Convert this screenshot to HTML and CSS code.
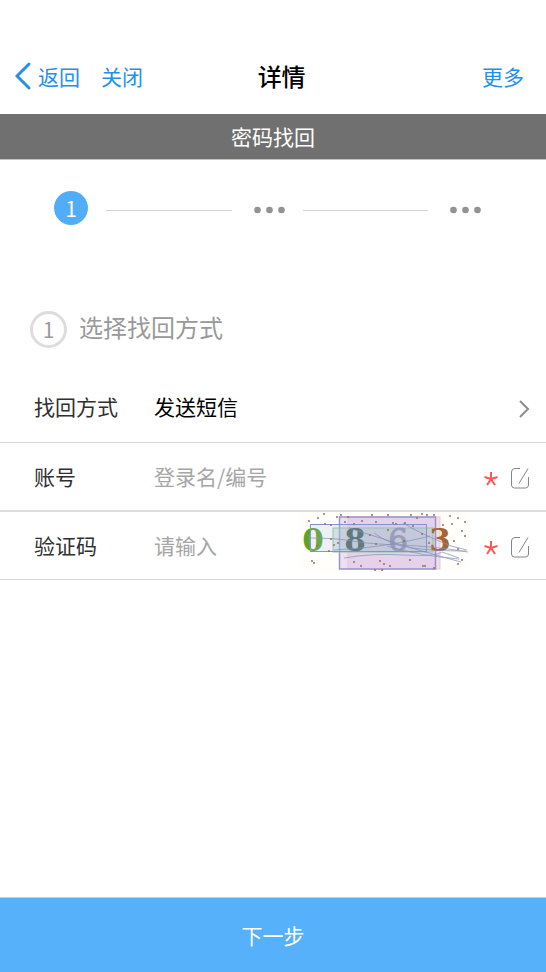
FILE: index.html
```html
<!DOCTYPE html>
<html lang="zh-CN">
<head>
<meta charset="utf-8">
<meta name="viewport" content="width=device-width, initial-scale=1">
<title>密码找回</title>
<link rel="stylesheet" href="styles.css">
</head>
<body>
<header class="navbar">
  <nav class="nav-left">
    <a class="nav-link back" href="#"><svg class="back-icon" viewBox="0 0 16 28" aria-hidden="true"><path d="M14 2 2 14l12 12"/></svg>返回</a>
    <a class="nav-link" href="#">关闭</a>
  </nav>
  <h1 class="nav-title">详情</h1>
  <a class="nav-link more" href="#">更多</a>
</header>
<div class="banner">密码找回</div>
<form class="content">
  <div class="steps">
    <span class="step-current">1</span>
    <span class="step-line"></span>
    <svg class="dots" viewBox="0 0 31 8" aria-hidden="true"><circle cx="3.500" cy="4" r="3.300"/><circle cx="15.500" cy="4" r="3.300"/><circle cx="27.500" cy="4" r="3.300"/></svg>
    <span class="step-line"></span>
    <svg class="dots" viewBox="0 0 31 8" aria-hidden="true"><circle cx="3.500" cy="4" r="3.300"/><circle cx="15.500" cy="4" r="3.300"/><circle cx="27.500" cy="4" r="3.300"/></svg>
  </div>
  <h2 class="section-title"><span class="section-number">1</span><span class="section-text">选择找回方式</span></h2>
  <div class="row">
    <label class="label" for="method">找回方式</label>
    <select class="control" id="method"><option>发送短信</option></select>
    <svg class="chevron" viewBox="0 0 12 20" aria-hidden="true"><path d="m2 2 8 8-8 8"/></svg>
  </div>
  <div class="row divided">
    <label class="label" for="account">账号</label>
    <input class="control" id="account" type="text" placeholder="登录名/编号">
    <svg class="required" viewBox="0 0 14 14" aria-hidden="true"><path d="M7 7V0M7 7 .5 5M7 7l6.500-2M7 7l-4 6M7 7l4 6"/></svg>
    <svg class="edit" viewBox="0 0 20 22" aria-hidden="true"><path d="M10 1.500H5Q1.500 1.500 1.500 5v13q0 3 3 3h11q3 0 3-3v-8"/><path d="m18 1.500-9 15"/></svg>
  </div>
  <div class="row">
    <label class="label" for="code">验证码</label>
    <input class="control" id="code" type="text" placeholder="请输入">
    <svg class="captcha" viewBox="0 0 170 60" role="img" aria-label="验证码图片">
      <rect width="170" height="60" fill="#fffefb"/>
      <rect x="49" y="5" width="92" height="52" fill="#f1deed" stroke="#e9c8cd"/>
      <rect x="40.500" y="5" width="96" height="52" fill="#d9c4e8" fill-opacity=".5" stroke="#9a93cb" stroke-width="1.500"/>
      <rect x="34" y="16" width="100" height="24" fill="#9fcbbd" fill-opacity=".38" stroke="#94c4a5"/>
      <g class="captcha-digits">
        <text x="14" y="39" fill="#5da326">0</text>
        <text x="56" y="39" fill="#4f6863">8</text>
        <text class="thin" x="99" y="39" fill="#9797ae" stroke="#9797ae">6</text>
        <text x="141" y="39" fill="#a8652f">3</text>
      </g>
      <rect x="11.500" y="12.500" width="116" height="27" fill="#a8b8e8" fill-opacity=".2" stroke="#8295d0"/>
      <g fill="none" stroke="#8290b8" stroke-opacity=".7" stroke-width="1">
        <path d="M11 26q26 0 42 3t48 4 68 7"/>
        <path d="M45 46q28-5 60-3t38-3l17 6"/>
        <path d="M50 16q25 8 50 16t62 18"/>
        <path d="M104 11q20 12 48 23l16 4"/>
        <path d="M75 21q16 12 38 15t54 3"/>
        <path d="M35 38q35-2 58-6t38-8"/>
        <path d="M88 34q34 10 72 13"/>
      </g>
      <path class="specks" fill="none" stroke="#96705f" d="M10 9h0M19 6h0M25 2h0M38 5h0M42 3h0M49 5h0M63 9h0M73 3h0M77 10h0M89 3h0M94 11h0M112 3h0M118 6h0M123 2h0M128 3h0M135 3h0M151 4h0M159 6h0M166 10h0M153 12h0M163 19h0M166 24h0M144 13h0M26 12h0M32 13h0M97 12h0M106 11h0M114 14h0M55 12h0M46 10h0M9 32h0M18 34h0M30 39h0M35 33h0M39 31h0M32 27h0M13 49h0M15 51h0M55 50h0M62 54h0M81 49h0M85 52h0M91 54h0M76 58h0M83 58h0M124 54h0M126 54h0M111 48h0M135 56h0M159 52h0M163 48h0M147 33h0M155 29h0M159 37h0M89 18h0M71 23h0M123 22h0M105 29h0M130 31h0M77 32h0"/>
    </svg>
    <svg class="required" viewBox="0 0 14 14" aria-hidden="true"><path d="M7 7V0M7 7 .5 5M7 7l6.500-2M7 7l-4 6M7 7l4 6"/></svg>
    <svg class="edit" viewBox="0 0 20 22" aria-hidden="true"><path d="M10 1.500H5Q1.500 1.500 1.500 5v13q0 3 3 3h11q3 0 3-3v-8"/><path d="m18 1.500-9 15"/></svg>
  </div>
  <button class="next" type="button">下一步</button>
</form>
</body>
</html>
```
FILE: styles.css
```css
* {
  box-sizing: border-box;
}

body {
  margin: 0;
  min-height: 100vh;
  display: flex;
  flex-direction: column;
  background: #fff;
  color: #303030;
  font: 21px/32px "Noto Sans CJK SC", sans-serif;
}

.navbar {
  display: grid;
  grid-template-columns: 10fr auto 9fr;
  align-items: center;
  height: 114px;
  padding: 37px 22px 0 15px;
}

.nav-left {
  display: flex;
  gap: 21px;
}

.nav-link {
  color: #2490e8;
  text-decoration: none;
}

.back {
  display: flex;
  align-items: center;
  gap: 7px;
}

.back-icon {
  width: 16px;
  height: 28px;
  fill: none;
  stroke: #2490e8;
  stroke-width: 3;
  stroke-linecap: round;
}

.more {
  justify-self: end;
}

.nav-title {
  margin: 0;
  color: #000;
  font-size: 24px;
  font-weight: 500;
}

.banner {
  height: 46px;
  line-height: 44px;
  border-bottom: 1px solid #c4c4c4;
  background: #707070;
  color: #fff;
  text-align: center;
}

.content {
  flex: 1;
  display: flex;
  flex-direction: column;
}

.steps {
  display: flex;
  align-items: center;
  padding: 31px 65px 0 54px;
}

.step-current {
  width: 34px;
  height: 34px;
  border-radius: 50%;
  background: #52adf9;
  color: #fff;
  line-height: 34px;
  text-align: center;
}

.step-line {
  flex: 1;
  height: 1px;
  margin: 4px 22px 0 18px;
  background: #d2d2d2;
}

.dots {
  width: 31px;
  height: 8px;
  margin-top: 3px;
  fill: #929292;
}

.section-title {
  display: flex;
  align-items: center;
  gap: 12px;
  margin: 86px 30px 24px;
  color: #999;
  font-size: 24px;
  font-weight: 400;
}

.section-number {
  width: 37px;
  height: 37px;
  border: 3px solid #ddd;
  border-radius: 50%;
  font-size: 21px;
  line-height: 31px;
  text-align: center;
}

.section-text {
  padding-bottom: 5px;
}

.row {
  display: flex;
  align-items: center;
  height: 68px;
  padding: 0 16px 0 34px;
  border-bottom: 1px solid #d8d8d8;
}

.section-title + .row {
  height: 71px;
}

.divided {
  height: 69px;
  border-bottom: 2px solid #dcdcdc;
}

.label {
  flex: none;
  width: 120px;
  padding-bottom: 2px;
}

.control {
  flex: 1;
  min-width: 0;
  height: 44px;
  padding: 0 0 2px;
  border: 0;
  outline: 0;
  appearance: none;
  background: none;
  color: #000;
  font: inherit;
}

.control::placeholder {
  color: #a6a6a6;
  opacity: 1;
}

.chevron {
  width: 12px;
  height: 20px;
  margin-top: 4px;
  fill: none;
  stroke: #8c8c8c;
  stroke-width: 2;
}

.required {
  width: 14px;
  height: 14px;
  margin: 4px 12px 0 15px;
  fill: none;
  stroke: #ff5555;
  stroke-width: 2;
}

.edit {
  width: 20px;
  height: 22px;
  margin-top: 2px;
  fill: none;
  stroke: #858585;
  stroke-width: 1;
}

.captcha {
  width: 170px;
  height: 60px;
  margin-bottom: 8px;
}

.captcha-digits {
  font: bold 31px "DejaVu Serif", serif;
  text-anchor: middle;
}

.thin {
  font-weight: 400;
}

.specks {
  stroke-width: 2;
  stroke-linecap: round;
}

.next {
  height: 75px;
  margin-top: auto;
  padding: 0;
  border: 0;
  border-top: 1px solid #add5f8;
  background: #56b0fa;
  color: #fff;
  font: inherit;
}
```
